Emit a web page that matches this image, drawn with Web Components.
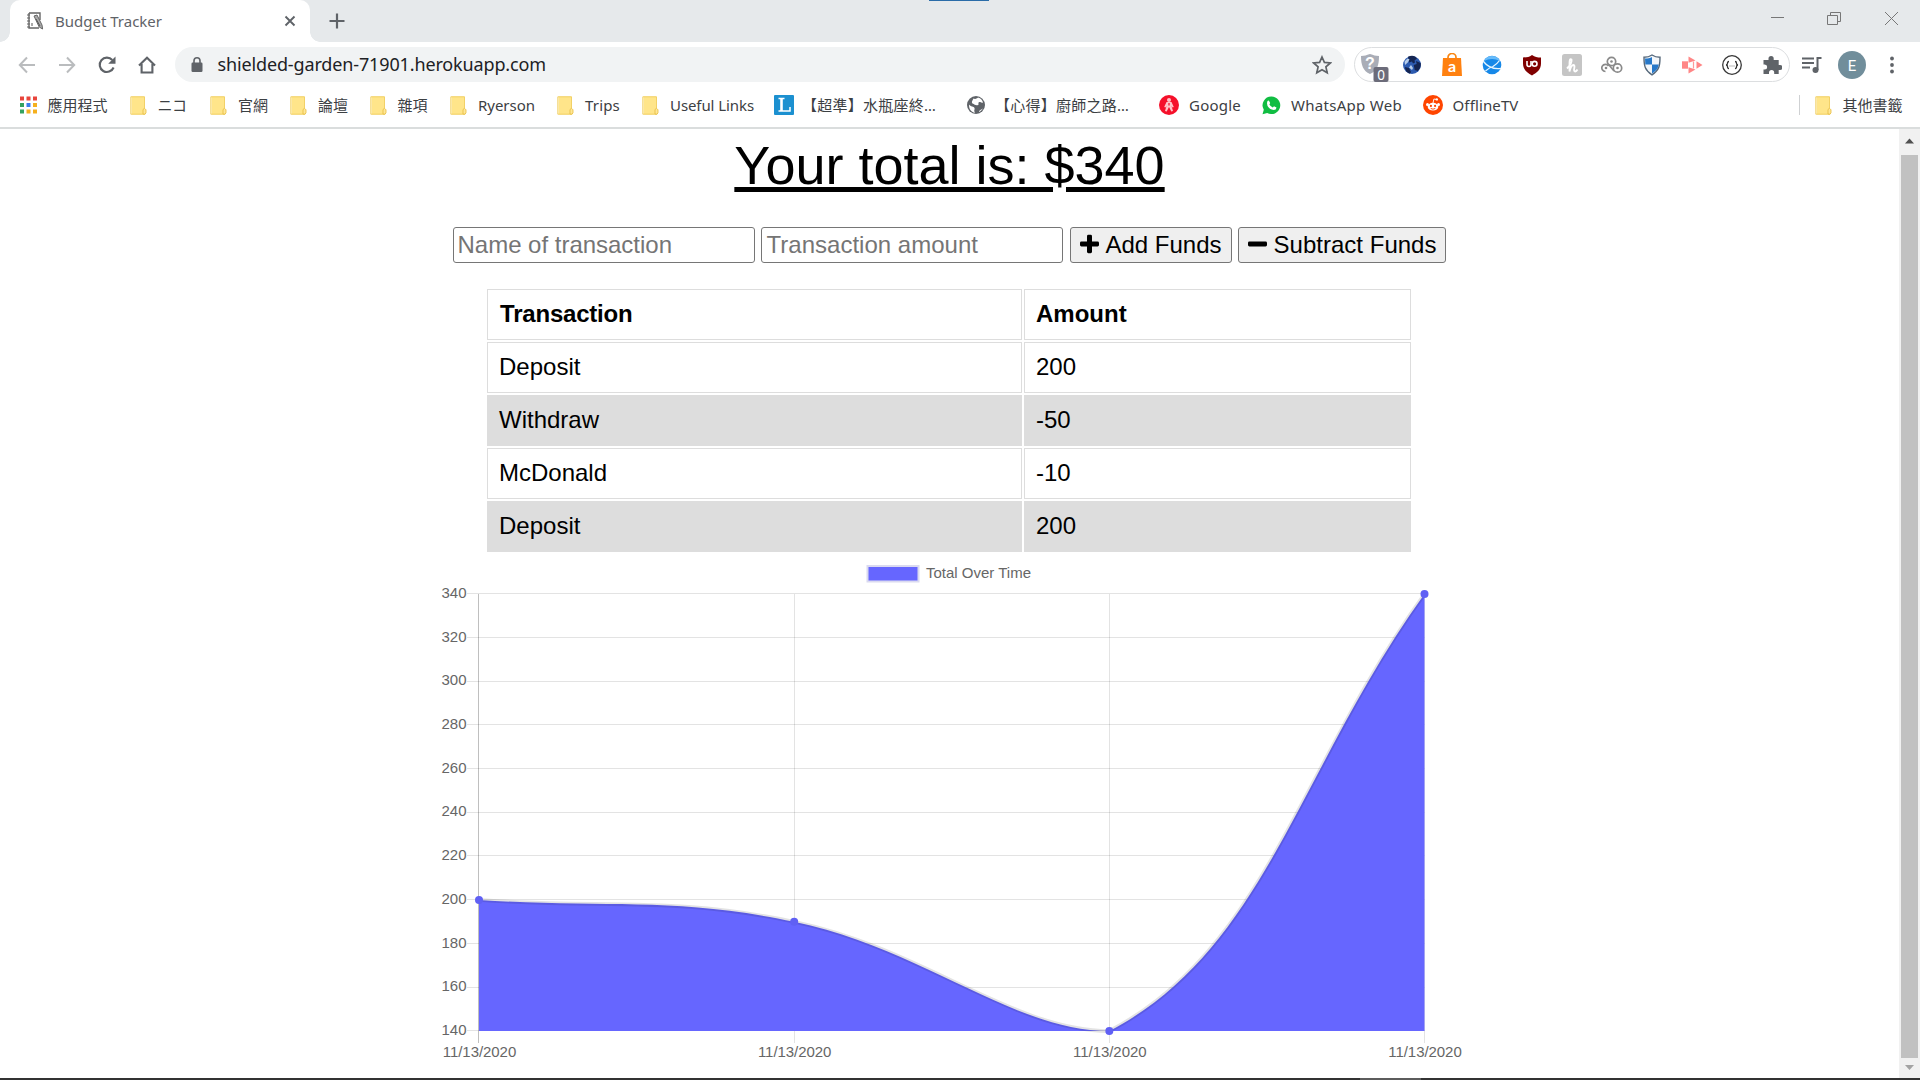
<!DOCTYPE html>
<html lang="zh-Hant">
<head>
<meta charset="utf-8">
<title>Budget Tracker</title>
<style>
html,body{margin:0;padding:0;width:1920px;height:1080px;overflow:hidden;background:#fff}
</style>
</head>
<body>
<app-window></app-window>
<script>
const UI = '"Noto Sans","Noto Sans CJK TC",sans-serif';
const ARIAL = '"Liberation Sans",Arial,sans-serif';

const ICONS = {
  page: [18,20,'<path d="M3 2h11v7M3 2v15h10" fill="none" stroke="#666" stroke-width="1.4"/><path d="M1 4h3M1 7h3M1 10h3M1 13h3M1 16h3" stroke="#666" stroke-width="1.2"/><path d="M8 5l3-1 5 10 .6 4-3.4-2z" fill="#aaa" stroke="#666"/><path d="M10 8l4 7M6 12v3" stroke="#555"/>'],
  close: [14,14,'<path d="M2.500 2.500l9 9m0-9l-9 9" stroke="#5f6368" stroke-width="1.900"/>'],
  plus: [18,18,'<path d="M9 1.500v15M1.500 9h15" stroke="#5f6368" stroke-width="2.200"/>'],
  min: [15,15,'<path d="M1 6.500h13" stroke="#777" stroke-width="1"/>'],
  restore: [15,15,'<path d="M.5 4.500h10v9H.5zM3.500 4V1.500h10v9H11" fill="none" stroke="#777"/>'],
  wclose: [15,15,'<path d="M1 1l13 13M14 1L1 14" stroke="#777" stroke-width="1"/>'],
  back: [20,20,'<path d="M18 10H3M10 2.500L2.800 10l7.200 7.500" fill="none" stroke="#babcbe" stroke-width="2"/>'],
  fwd: [20,20,'<path d="M2 10h15M10 2.500L17.200 10 10 17.500" fill="none" stroke="#babcbe" stroke-width="2"/>'],
  reload: [20,20,'<path d="M16.600 12.500A7.200 7.200 0 1 1 15.300 5" fill="none" stroke="#5f6368" stroke-width="2.100"/><path d="M18.500 1.500v7.300h-7.300z" fill="#5f6368"/>'],
  home: [20,20,'<path d="M2 10.500L10 2.800l8 7.700M4.600 9v8.500h10.800V9" fill="none" stroke="#5f6368" stroke-width="2.100"/>'],
  lock: [14,18,'<rect x="1.500" y="6.500" width="11" height="9.500" rx="1.200" fill="#5f6368"/><path d="M4 7V4.800a3 3 0 0 1 6 0V7" fill="none" stroke="#5f6368" stroke-width="1.600"/>'],
  star: [20,20,'<path d="M10 2l2.400 5.400 5.900.6-4.400 3.900 1.300 5.800L10 14.700l-5.200 3 1.300-5.800L1.700 8l5.900-.6z" fill="none" stroke="#5f6368" stroke-width="1.700"/>'],
  privacy: [32,34,'<path d="M3 8c4 0 5-1 9-2 4 1 5 2 9 2 0 10-2 15-9 18C5 23 3 17 3 8z" fill="#a9adb7"/><text x="12" y="20.500" font-family="Liberation Sans" font-weight="700" font-size="16" fill="#fff" text-anchor="middle">?</text><rect x="15.500" y="19" width="15" height="15" rx="2" fill="#6c6c7a"/><text x="23" y="31.500" font-family="Noto Sans" font-size="13.500" fill="#fff" text-anchor="middle">0</text>'],
  earth: [20,20,'<circle cx="10" cy="10" r="9" fill="#2d5bb0"/><path d="M6 1.800q4-2 7-.3l2 2-2.500 2 .5 2-2 1-1-2-3 1zM14 6l4.700 2q.5 5-3 8l-3-1-1-5 3-1zM3 12l4 1 2 4-1 1.700q-5-1.700-5-6.700z" fill="#142552"/><path d="M2.500 6.500l3-3 2 .8-1.500 3-3 2.700zM9 10l2 3-1 2-3-2.500z" fill="#b7cdea"/>'],
  bag: [22,24,'<path d="M7 7V4.500a4 4 0 0 1 8 0V7" fill="none" stroke="#f98714" stroke-width="1.700"/><path d="M2 5h18l1 18H1z" fill="#ff8110"/><text x="11" y="19" font-family="Lato" font-weight="700" font-size="16" fill="#fff" text-anchor="middle">a</text>'],
  globeb: [20,20,'<circle cx="10" cy="10" r="9.300" fill="#1688e8"/><path d="M2 6a9 9 0 0 1 16 0q-8-4-16 0z" fill="#67bbfa"/><path d="M1 6q7 9 18 7.500M3.500 16q4-3.500 7.500-4.500 4.500-3 6.500-6" fill="none" stroke="#e5f5ff" stroke-width="1.300"/>'],
  ublock: [20,22,'<path d="M10 1c3 2 5 2.500 9 2.500v6c0 6-4 9-9 12-5-3-9-6-9-12v-6c4 0 6-.5 9-2.500z" fill="#800000"/><path d="M5 7v3.500a2 2 0 0 0 4 0V7" fill="none" stroke="#fff" stroke-width="1.600"/><circle cx="12.600" cy="9.800" r="2.400" fill="none" stroke="#fff" stroke-width="1.600"/>'],
  honey: [20,22,'<rect width="20" height="22" rx="2.500" fill="#c5c5c5"/><path d="M5 14.500Q10.500 9 9.500 5.500 7.500 4 7.500 9v8.500Q9 11 11.500 11q1.500.3.700 3.500-.6 3 1 3 1.300-.2 2.300-2" fill="none" stroke="#fff" stroke-width="1.800"/>'],
  rings: [22,20,'<g fill="none" stroke="#8a8a8a" stroke-width="1.700"><circle cx="10.500" cy="6.500" r="4.200"/><path d="M4.500 16.500a3.600 3.600 0 1 1 3-5.500"/><circle cx="16.500" cy="13" r="4.200"/></g><g fill="#888"><circle cx="10.500" cy="6.500" r="1.300"/><circle cx="5" cy="13" r="1.300"/><circle cx="16.500" cy="13" r="1.300"/></g><path d="M7.500 9.500l5.500 6.500" stroke="#8a8a8a" stroke-width="1.500"/>'],
  shield: [18,22,'<path d="M9 1c3 2 5 2.300 8 2.300 0 9-1 13-8 17.500C2 16.300 1 12.300 1 3.300 4 3.300 6 3 9 1z" fill="#f4f7fa" stroke="#56687a" stroke-width="1.400"/><path d="M9 3v7.500H2.300L2 4.500c3 0 5-.4 7-1.500zM9 10.500h6.700c-.6 4-2.400 6.500-6.700 9z" fill="#2878c8"/>'],
  cast: [22,20,'<rect x="1" y="6.300" width="6" height="7.400" fill="#ff8686"/><path d="M7.500 1.500l7 4-7 2.300zM7.500 18.500l7-4-7-2.300zM15.500 6.200L21.500 10l-6 3.800z" fill="#ff8686"/><path d="M12.500 6.500v7" stroke="#ff9a9a" stroke-width="1.200"/>'],
  json: [22,22,'<circle cx="11" cy="11" r="9.300" fill="none" stroke="#383838" stroke-width="1.300"/><path d="M8 7.500q-1.500 0-1.500 1.700T5 11q1.500 0 1.500 1.800T8 14.500M14 7.500q1.500 0 1.500 1.700T17 11q-1.500 0-1.500 1.800T14 14.500" fill="none" stroke="#333" stroke-width="1.300"/><path d="M8.500 12h5" stroke="#777" stroke-dasharray="1 1"/>'],
  puzzle: [20,20,'<path d="M1.500 5h5V3.600a2.600 2.600 0 0 1 5.200 0V5h5v5H18a2.500 2.500 0 0 1 0 5h-1.300v4h-4.500v-1.300a2.600 2.600 0 0 0-5.200 0V19H1.500v-4.600h1.200a2.500 2.500 0 0 0 0-5H1.500z" fill="#5f6368"/>'],
  music: [22,20,'<path d="M1 3.500h12M1 8h12M1 12.500h8" stroke="#5f6368" stroke-width="2"/><path d="M16.500 15V3H20.500" fill="none" stroke="#5f6368" stroke-width="2"/><circle cx="14.500" cy="15" r="3" fill="#5f6368"/>'],
  avatar: [28,28,'<circle cx="14" cy="14" r="14" fill="#718e9b"/><text x="14" y="19.500" font-family="Roboto" font-size="15" fill="#fff" text-anchor="middle">E</text>'],
  dots: [6,20,'<circle cx="3" cy="3.500" r="1.900" fill="#5f6368"/><circle cx="3" cy="10" r="1.900" fill="#5f6368"/><circle cx="3" cy="16.500" r="1.900" fill="#5f6368"/>'],
  apps: [17,18,'<path d="M0 .5h4v4H0zM6.500.5h4v4h-4zM13 .5h4v4h-4z" fill="#e8453c"/><path d="M0 7h4v4H0zM0 13.500h4v4H0z" fill="#34a260"/><path d="M6.500 7h4v4h-4z" fill="#3b7ded"/><path d="M13 7h4v4h-4zM6.500 13.500h4v4h-4zM13 13.500h4v4h-4z" fill="#f5b01e"/>'],
  folder: [17,19,'<path d="M1.500.5h13v12l1.500 1v4l-1 1h-13.500z" fill="#ffe58a"/><path d="M.8.800h13.700v11.500M.8.800v17.400h14" fill="none" stroke="#f0cd5c" stroke-width=".9"/><path d="M13 18v-4.500l1.500-1.200 1.500 1.500v3l-1 1.400z" fill="#ffe795" stroke="#e6bb40" stroke-width=".8"/>'],
  ell: [20,20,'<rect width="20" height="20" rx="1" fill="#1c90d0"/><path d="M4.500 3.500h6M4.500 16h11.500v-4" fill="none" stroke="#fff" stroke-width="1.500"/><path d="M7.500 3.500v12.500" stroke="#fff" stroke-width="2.600"/>'],
  globe: [18,18,'<circle cx="9" cy="9" r="9" fill="#5f6368"/><path d="M2 8.500c1.500 2.500 5 1.500 5.500 3.500s-1 2 .5 4.800C4 16 1.800 13 2 8.500zM6.500 2.600c2 1 4-.4 4.500-1 3 .8 4.600 3 5 5-2 .8-2.500-1-4-.4-1.500.8.500 2-1 2.800-1.800.8-3.500-.5-5.500-1.500-1.500-1.200.3-3.400 1-4.900zM12 16c0-2 2.500-2 4-4-.7 1.800-2 3.200-4 4z" fill="#fff"/>'],
  google: [20,20,'<circle cx="10" cy="10" r="10" fill="#f5102a"/><circle cx="10" cy="5" r="2" fill="#ffc4c8"/><path d="M7.500 7h5l2.300 5-1.300.6-1-1.600 1.500 5-1.700.6-2.300-4.600-2.300 4.600L6 16l1.500-5-1 1.600-1.300-.6z" fill="#ffc4c8"/><path d="M9.400 8h1.200v2.500H9.400z" fill="#ef1024"/>'],
  whats: [19,19,'<path d="M9.500.5a8.800 8.800 0 1 1-4.300 16.500L.5 18.300l1.300-4.500A8.800 8.800 0 0 1 9.500.5z" fill="#10bd42"/><path d="M5.500 5l1.300-.6 1.400 2.700-.8 1.300q1.400 2.200 3.400 3l1.200-1.200 2.500 1.400q-.2 2.500-2.700 2.500Q5.500 13 5 7.500 5 6 5.500 5z" fill="#fff"/>'],
  reddit: [20,20,'<circle cx="10" cy="10" r="10" fill="#ff4500"/><ellipse cx="10" cy="11.700" rx="5.300" ry="3.900" fill="#fff"/><circle cx="4.500" cy="9.500" r="1.500" fill="#fff"/><circle cx="15.500" cy="9.500" r="1.500" fill="#fff"/><circle cx="13.800" cy="4.400" r="1.200" fill="#fff"/><path d="M10 8l.9-4 2.700.5" fill="none" stroke="#fff" stroke-width=".9"/><circle cx="7.900" cy="10.900" r="1.100" fill="#ff4500"/><circle cx="12.100" cy="10.900" r="1.100" fill="#ff4500"/><path d="M7.700 13.400q2.300 1.600 4.600 0" fill="none" stroke="#ff4500" stroke-width=".9"/>']
};

class UiIcon extends HTMLElement {
  connectedCallback() {
    const [w,h,body] = ICONS[this.getAttribute('name')];
    this.attachShadow({mode:'open'}).innerHTML =
      `<style>:host{display:inline-flex;flex:none}svg{display:block}</style><svg width="${w}" height="${h}" viewBox="0 0 ${w} ${h}">${body}</svg>`;
  }
}
customElements.define('ui-icon', UiIcon);

/* One line of text whose tracking is set so that it fills the given advance width. */
class FitText extends HTMLElement {
  connectedCallback() {
    this.attachShadow({mode:'open'}).innerHTML =
      `<style>:host{display:inline-block;white-space:nowrap;flex:none}span{display:inline-block}</style><span><slot></slot></span>`;
    const span = this.shadowRoot.querySelector('span');
    const target = parseFloat(this.getAttribute('w'));
    const w = span.getBoundingClientRect().width;
    this.style.width = target + 'px';
    this.style.letterSpacing = (target - w) / [...this.textContent].length + 'px';
  }
}
customElements.define('fit-text', FitText);

class TabStrip extends HTMLElement {
  connectedCallback() {
    this.attachShadow({mode:'open'}).innerHTML = `<style>
      :host{display:flex;height:42px;background:#e6e9eb;justify-content:space-between;position:relative;font:15px ${UI};color:#5f6368}
      .left,.win{display:flex}
      .left{padding-left:10px}
      .tab{box-sizing:border-box;width:300px;height:42px;background:#fff;border-radius:10px 10px 0 0;display:flex;align-items:center;padding:0 13px 0 16px;position:relative}
      .tab::before,.tab::after{content:"";position:absolute;bottom:0;width:10px;height:10px}
      .tab::before{left:-10px;background:radial-gradient(circle at 0 0,transparent 9.500px,#fff 10px)}
      .tab::after{right:-10px;background:radial-gradient(circle at 100% 0,transparent 9.500px,#fff 10px)}
      fit-text{margin-left:11px;flex:1}
      .new{display:flex;align-items:center;margin-left:18px}
      .win{padding:11px 21px 0 0;gap:42px;align-items:flex-start}
      .strip{position:absolute;left:929px;top:0;width:60px;height:1px;background:#2a6ca8}
    </style>
    <div class="left"><div class="tab"><ui-icon name="page"></ui-icon><fit-text w="107">Budget Tracker</fit-text><ui-icon name="close" style="margin-left:auto"></ui-icon></div><div class="new"><ui-icon name="plus"></ui-icon></div></div>
    <div class="win"><ui-icon name="min"></ui-icon><ui-icon name="restore"></ui-icon><ui-icon name="wclose"></ui-icon></div><div class="strip"></div>`;
  }
}
customElements.define('tab-strip', TabStrip);

class NavBar extends HTMLElement {
  connectedCallback() {
    const cells = a => a.map(n => `<span class="c"><ui-icon name="${n}"></ui-icon></span>`).join('');
    this.attachShadow({mode:'open'}).innerHTML = `<style>
      :host{display:flex;box-sizing:border-box;height:46px;padding:5px 5px 0 7px;align-items:flex-start;font:18px ${UI};color:#202124}
      .c{width:40px;height:35px;display:flex;align-items:center;justify-content:center;flex:none}
      .omni{box-sizing:border-box;width:1170px;height:35px;border-radius:18px;background:#f1f3f4;display:flex;align-items:center;margin-left:8px;padding:0 3px 0 15px;flex:none}
      .omni fit-text{margin-left:13.500px;margin-right:auto;line-height:35px}
      .ext{box-sizing:border-box;width:436px;height:35px;border:1px solid #dcdee0;border-radius:18px;margin-left:9px;margin-right:2px;display:flex;align-items:center;flex:none}
      .first{width:37px;height:35px;display:flex;align-items:center;flex:none}
      .first ui-icon{margin-left:3px}
    </style>${cells(['back','fwd','reload','home'])}
    <div class="omni"><ui-icon name="lock"></ui-icon><fit-text w="328.5">shielded-garden-71901.herokuapp.com</fit-text>${cells(['star'])}</div>
    <div class="ext"><span class="first"><ui-icon name="privacy"></ui-icon></span>${cells(['earth','bag','globeb','ublock','honey','rings','shield','cast','json','puzzle'])}</div>
    ${cells(['music','avatar','dots'])}`;
  }
}
customElements.define('nav-bar', NavBar);

/* icon, icon start, label, label start, label width */
const MARKS = [
  ['apps',20,'應用程式',47.5,60],['folder',129.5,'ニコ',157.5,29],['folder',209.5,'官網',238,30],['folder',289.5,'論壇',318,30],
  ['folder',369.5,'雜項',397.5,30],['folder',449.5,'Ryerson',478,57],['folder',556.5,'Trips',585,35],['folder',641.5,'Useful Links',670,84],
  ['ell',774,'【超準】水瓶座終…',802,134],['globe',967,'【心得】廚師之路…',995,134],['google',1159,'Google',1189,52],
  ['whats',1262,'WhatsApp Web',1291,111],['reddit',1423,'OfflineTV',1452.5,66],['folder',1814.5,'其他書籤',1842.5,60]
];
class BookmarkBar extends HTMLElement {
  connectedCallback() {
    let html = '', x = 0;
    MARKS.forEach(([ic,ix,t,tx,w]) => {
      const iw = ICONS[ic][0];
      if (ix > 1800) { html += `<i style="margin-left:${1799-x}px"></i>`; x = 1800; }
      html += `<span style="margin-left:${ix-x}px;gap:${tx-ix-iw}px"><ui-icon name="${ic}"></ui-icon><fit-text w="${w}">${t}</fit-text></span>`;
      x = tx + w;
    });
    this.attachShadow({mode:'open'}).innerHTML = `<style>
      :host{display:flex;box-sizing:border-box;height:41px;padding-bottom:5px;border-bottom:2px solid #dadddd;align-items:center;font:15px ${UI};color:#3c4043}
      span{display:flex;align-items:center;flex:none;height:24px}
      fit-text{line-height:24px}
      i{width:1px;height:20px;background:#cfd1d3;flex:none}
    </style>${html}`;
  }
}
customElements.define('bookmark-bar', BookmarkBar);

class FundForm extends HTMLElement {
  connectedCallback() {
    this.attachShadow({mode:'open'}).innerHTML = `<style>
      :host{display:flex;font:24px ${ARIAL};color:#000;width:993px;height:36px}
      div{box-sizing:border-box;height:36px;line-height:34px;border:1px solid #767676;border-radius:3px;display:flex;align-items:center}
      .in{width:302px;padding-left:3.500px;color:#757575;background:#fff}
      .b{background:#efefef;padding-left:9px;gap:6.500px}
      svg{flex:none;display:block;margin-bottom:2px}
    </style>
    <div class="in"><fit-text w="214.5">Name of transaction</fit-text></div>
    <div class="in" style="margin-left:6px;padding-left:4.500px"><fit-text w="211.5">Transaction amount</fit-text></div>
    <div class="b" style="margin-left:7px;width:162px"><svg width="19" height="20" viewBox="0 0 19 20"><path d="M9.500 1v18M0 10h19" stroke="#000" stroke-width="0"/><rect x="7" y=".8" width="5" height="18.400" rx="1.400"/><rect x="0" y="7.500" width="19" height="5" rx="1.400"/></svg><fit-text w="116">Add Funds</fit-text></div>
    <div class="b" style="margin-left:6px;width:208px"><svg width="19" height="20" viewBox="0 0 19 20"><rect x="0" y="7.500" width="19" height="5" rx="1.400"/></svg><fit-text w="163">Subtract Funds</fit-text></div>`;
  }
}
customElements.define('fund-form', FundForm);

class LedgerTable extends HTMLElement {
  connectedCallback() {
    const rows = [['Deposit','200'],['Withdraw','-50'],['McDonald','-10'],['Deposit','200']];
    this.attachShadow({mode:'open'}).innerHTML = `<style>
      :host{display:grid;grid-template-columns:535px 387px;grid-auto-rows:51px;gap:2px;margin-right:1px;font:24px/48px ${ARIAL};color:#000}
      div{box-sizing:border-box;border:1px solid #ddd;padding-left:11px}
      .h{font-weight:700}.g{background:#ddd}
    </style><div class="h" style="padding-left:12px"><fit-text w="132.5">Transaction</fit-text></div><div class="h">Amount</div>` +
      rows.map((r,i) => r.map(c => `<div class="${i%2?'g':''}">${c}</div>`).join('')).join('');
  }
}
customElements.define('ledger-table', LedgerTable);

class TotalChart extends HTMLElement {
  connectedCallback() {
    const X0=479, X1=1424.5, Y0=594, Y1=1031;
    const data=[200,190,140,340];
    const P=data.map((v,i)=>[X0+(X1-X0)*i/3, Y1-(v-140)/200*(Y1-Y0)]);
    const dist=(a,b)=>Math.hypot(a[0]-b[0],a[1]-b[1]);
    const cap=p=>[Math.min(X1,Math.max(X0,p[0])),Math.min(Y1,Math.max(Y0,p[1]))];
    const C=P.map((p,i)=>{
      const a=P[i-1]||p,b=P[i+1]||p,d1=dist(a,p),d2=dist(p,b),f1=.4*d1/(d1+d2),f2=.4*d2/(d1+d2);
      return [cap([p[0]-f1*(b[0]-a[0]),p[1]-f1*(b[1]-a[1])]),cap([p[0]+f2*(b[0]-a[0]),p[1]+f2*(b[1]-a[1])])];
    });
    let d=`M${P[0]}`;
    for(let i=1;i<4;i++) d+=`C${C[i-1][1]} ${C[i][0]} ${P[i]}`;
    let grid='',labels='';
    for(let i=0;i<=10;i++){
      const y=Y1-(Y1-Y0)*i/10, yy=Math.floor(y-.3)+.5;
      grid+=`<path d="M467 ${yy}H${X1}"/>`;
      labels+=`<text x="466.500" y="${Math.round(y+3.9)}" text-anchor="end">${140+20*i}</text>`;
    }
    P.forEach((p,i)=>{
      const xx=Math.round(p[0]-.2)+(i?.5:-.5);
      grid+=`<path d="M${i===3?1424.5:xx} ${Y0}V1043"${i?'':' stroke-opacity=".25"'}/>`;
      labels+=`<text x="${p[0]+.5}" y="1057" text-anchor="middle" textLength="73.500">11/13/2020</text>`;
    });
    this.attachShadow({mode:'open'}).innerHTML = `<style>:host{display:block}svg{display:block}text{font:15px ${ARIAL};fill:#666}</style>
    <svg width="1060" height="520" viewBox="420 558 1060 520">
      <g fill="none" stroke="#000" stroke-opacity=".11">${grid}</g>
      <rect x="867.500" y="566" width="51" height="15.500" fill="#6666ff" stroke="#dadaf0" stroke-width="2"/>
      <text x="926" y="578" textLength="105">Total Over Time</text>
      <path d="${d}L${X1} ${Y1}L${X0} ${Y1}Z" fill="#6666ff"/>
      <path d="${d}" fill="none" stroke="#000" stroke-opacity=".11" stroke-width="3.750"/>
      ${P.map(p=>`<circle cx="${p[0]}" cy="${p[1]}" r="4" fill="#6060f4"/>`).join('')}${labels}
    </svg>`;
  }
}
customElements.define('total-chart', TotalChart);

class ScrollBar extends HTMLElement {
  connectedCallback() {
    this.attachShadow({mode:'open'}).innerHTML = `<style>
      :host{display:flex;flex-direction:column;width:21px;background:#f1f1f1;align-items:center;flex:none}
      .t{width:17px;flex:1;background:#c1c1c1}svg{display:block}
    </style><svg width="21" height="26"><path d="M6 14.500l4.500-5 4.500 5z" fill="#505050"/></svg><div class="t"></div><svg width="21" height="20"><path d="M6 7l4.500 5L15 7z" fill="#a3a3a3"/></svg>`;
  }
}
customElements.define('scroll-bar', ScrollBar);

class BudgetPage extends HTMLElement {
  connectedCallback() {
    this.attachShadow({mode:'open'}).innerHTML = `<style>
      :host{display:flex;height:949px;background:#fff}
      main{flex:1;display:flex;flex-direction:column;align-items:center;overflow:hidden}
      h1{margin:5px 0 0;height:93px;font:400 54px/63px ${ARIAL};color:#000;text-decoration:underline;text-decoration-thickness:5px;text-underline-offset:3px}
      fund-form{margin-bottom:26px}
      total-chart{margin-top:6px}
    </style><main><h1>Your total is: $340</h1><fund-form></fund-form><ledger-table></ledger-table><total-chart></total-chart></main><scroll-bar></scroll-bar>`;
  }
}
customElements.define('budget-page', BudgetPage);

class AppWindow extends HTMLElement {
  connectedCallback() {
    this.attachShadow({mode:'open'}).innerHTML = `<style>
      :host{display:flex;flex-direction:column;width:1920px;height:1080px;overflow:hidden;background:#fff}
      .task{height:2px;background:linear-gradient(90deg,#333 1360px,#5c5c5c 1360px,#5c5c5c 1421px,#333 1421px)}
    </style><tab-strip></tab-strip><nav-bar></nav-bar><bookmark-bar></bookmark-bar><budget-page></budget-page><div class="task"></div>`;
  }
}
customElements.define('app-window', AppWindow);
</script>
</body>
</html>
